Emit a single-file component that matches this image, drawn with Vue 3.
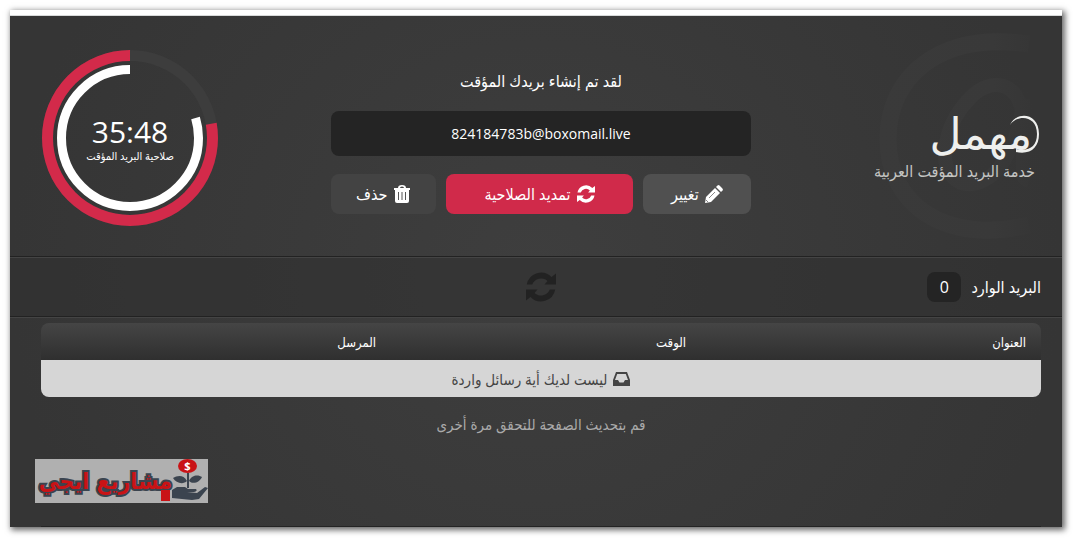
<script setup>
import { computed, ref } from 'vue'

const email = ref('824184783b@boxomail.live')
const messages = ref([])
const remaining = ref(2148)

const columns = [
  { key: 'title', label: 'العنوان' },
  { key: 'time', label: 'الوقت' },
  { key: 'sender', label: 'المرسل' },
]

const clock = computed(() => {
  const minutes = String(Math.floor(remaining.value / 60)).padStart(2, '0')
  const seconds = String(remaining.value % 60).padStart(2, '0')
  return `${minutes}:${seconds}`
})
</script>

<template>
  <div class="window" dir="rtl">
    <header class="hero">
      <div class="brand">
        <svg class="brand-mark" viewBox="0 0 160 210" aria-hidden="true">
          <defs>
            <linearGradient id="mark-fade" gradientUnits="userSpaceOnUse" x1="0" y1="0" x2="152" y2="0">
              <stop offset="0" stop-color="#3a3a3a" />
              <stop offset="0.75" stop-color="#393939" />
              <stop offset="1" stop-color="#363636" />
            </linearGradient>
          </defs>
          <g fill="none" stroke="url(#mark-fade)">
            <path d="M150 11C60 -2 9 44 9 106C9 172 66 212 150 192" stroke-width="17" />
            <path d="M144 84C140 48 112 44 92 64C66 90 60 126 72 142C86 160 112 150 126 126C138 104 142 90 144 66V140Q144 146 150 148" stroke-width="14" />
          </g>
        </svg>
        <div class="brand-name">
          مهمل
          <svg class="brand-swirl" viewBox="0 0 30 40" aria-hidden="true">
            <path d="M1 10C8 -1 28 0 28 19C28 32 19 37 7 34L7 37C21 40 30 33 30 19C30 -3 7 -4 1 10Z" fill="#eeefed" />
          </svg>
        </div>
        <div class="tagline">خدمة البريد المؤقت العربية</div>
      </div>

      <div class="mailbox">
        <label class="status" for="address">لقد تم إنشاء بريدك المؤقت</label>
        <input id="address" v-model="email" class="address" type="text" dir="ltr" readonly />
        <div class="actions">
          <button class="btn btn--edit" type="button">
            <svg class="icon" viewBox="0 0 18 18" aria-hidden="true">
              <path d="M0 18L1 12L10 3L15 8L6 17Z" fill="currentColor" />
              <path d="M11 2L12.500 .5Q13.500 -.3 14.500 .6L17.400 3.500Q18.300 4.500 17.500 5.500L16 7Z" fill="currentColor" />
              <path d="M4 13L10 7M1 15L3 17" stroke="#888" stroke-width="1" />
            </svg>
            تغيير
          </button>
          <button class="btn btn--renew" type="button">
            <svg class="icon" viewBox="0 0 30 30" aria-hidden="true">
              <path d="M.8 12.500A14.500 14.500 0 0 1 25.500 5L30 1.500V12.500H18.500L21.500 9A9.500 9.500 0 0 0 6.200 12.500Z" fill="currentColor" />
              <path d="M29.200 17.500A14.500 14.500 0 0 1 4.500 25L0 28.500V17.500H11.500L8.500 21A9.500 9.500 0 0 0 23.800 17.500Z" fill="currentColor" />
            </svg>
            تمديد الصلاحية
          </button>
          <button class="btn btn--delete" type="button">
            <svg class="icon" viewBox="0 0 18 18" aria-hidden="true">
              <path d="M5 3Q5 0 9 0Q13 0 13 3H17V5H1V3ZM7 3H11Q11 1.500 9 1.500Q7 1.500 7 3Z" fill="currentColor" />
              <path d="M2 5H16V16Q16 18 14 18H4Q2 18 2 16Z" fill="currentColor" />
              <path d="M5.500 7V15M9 7V15M12.500 7V15" stroke="#555" stroke-width="1" />
            </svg>
            حذف
          </button>
        </div>
      </div>

      <div class="timer">
        <svg class="rings" viewBox="0 0 176 176" aria-hidden="true">
          <g fill="none" transform="rotate(-90 88 88)">
            <circle cx="88" cy="88" r="82.500" stroke="#3d3d3d" stroke-width="11" />
            <circle cx="88" cy="88" r="82.500" stroke="#d32a4a" stroke-width="11" pathLength="360" stroke-dasharray="0 80 280" />
            <circle cx="88" cy="88" r="68.500" stroke="#fff" stroke-width="9" pathLength="360" stroke-dasharray="0 73 287" />
          </g>
        </svg>
        <div class="timer-text">
          <div class="clock">{{ clock }}</div>
          <div class="timer-label">صلاحية البريد المؤقت</div>
        </div>
      </div>
    </header>

    <section class="toolbar">
      <h2 class="inbox-title">
        البريد الوارد
        <span class="count">{{ messages.length }}</span>
      </h2>
      <button class="refresh" type="button" aria-label="تحديث">
        <svg viewBox="0 0 30 30" width="30" height="30" aria-hidden="true">
          <path d="M.8 12.500A14.500 14.500 0 0 1 25.500 5L30 1.500V12.500H18.500L21.500 9A9.500 9.500 0 0 0 6.200 12.500Z" fill="currentColor" />
          <path d="M29.200 17.500A14.500 14.500 0 0 1 4.500 25L0 28.500V17.500H11.500L8.500 21A9.500 9.500 0 0 0 23.800 17.500Z" fill="currentColor" />
        </svg>
      </button>
    </section>

    <main class="content">
      <table class="messages">
        <thead>
          <tr>
            <th v-for="column in columns" :key="column.key" :class="`col--${column.key}`" scope="col">{{ column.label }}</th>
          </tr>
        </thead>
        <tbody>
          <tr v-for="message in messages" :key="message.id">
            <td v-for="column in columns" :key="column.key">{{ message[column.key] }}</td>
          </tr>
          <tr v-if="!messages.length">
            <td :colspan="columns.length">
              <span class="empty-text">
                <svg viewBox="0 0 17 14" width="17" height="14" aria-hidden="true">
                  <path fill-rule="evenodd" d="M3 0H14L17 8V14H0V8ZM4.200 2L2 8H5L6.500 10.500H10.500L12 8H15L12.800 2Z" fill="currentColor" />
                </svg>
                ليست لديك أية رسائل واردة
              </span>
            </td>
          </tr>
        </tbody>
      </table>
      <p class="hint">قم بتحديث الصفحة للتحقق مرة أخرى</p>
    </main>

    <footer class="footer">
      <div class="sponsor">
        <svg class="sponsor-art" viewBox="0 0 36 44" aria-hidden="true">
          <g fill="#3b444f">
            <path d="M15 14H17V29H15Z" />
            <path d="M15 22C11 15 5 17 1 19C4 24 11 26 15 22ZM17 22C20 15 27 16 30 18C28 23 21 26 17 22Z" />
            <path d="M0 31L5 28H13L16 30H24Q26 32 22 33H15L25 34L33 28L36 29L27 40L20 41L0 39Z" />
          </g>
          <ellipse cx="15.500" cy="7" rx="9.500" ry="7" fill="#c91316" />
          <text x="15.500" y="11" text-anchor="middle" class="coin">$</text>
        </svg>
        <span class="sponsor-name">مشاريع ايجي</span>
        <span class="sponsor-dot"></span>
      </div>
    </footer>
  </div>
</template>

<style>
body {
  margin: 0;
  background: #fff;
}
</style>

<style scoped>
.window {
  margin: 10px 11px 11px 10px;
  border-top: 5px solid #fff;
  background: radial-gradient(ellipse 50% 100% at 50% 50%, #3e3e3e, #353535);
  background-clip: padding-box;
  box-shadow: 2px 2px 6px 1px rgba(0, 0, 0, 0.6);
  color: #fff;
  font-family: 'Open Sans', 'DejaVu Sans Condensed', 'DejaVu Sans', sans-serif;
  font-size: 16px;
}

.hero {
  box-sizing: border-box;
  min-height: 242px;
  padding: 3px 21px 0 31px;
  border-top: 1px solid #d8dada;
  border-bottom: 1px solid #222;
  display: grid;
  grid-template-columns: 1fr 420px 1fr;
  align-items: center;
}

.brand {
  position: relative;
  justify-self: start;
  padding-top: 16px;
}

.brand-mark {
  position: absolute;
  width: 160px;
  height: 210px;
  right: 2px;
  top: 50%;
  margin-top: -105px;
}

.brand-name {
  position: relative;
  width: max-content;
  padding-right: 9px;
  color: #eeefed;
  font-family: 'DejaVu Sans', sans-serif;
  font-size: 44px;
  line-height: 50px;
}

.brand-swirl {
  position: absolute;
  width: 30px;
  height: 40px;
  right: 2px;
  top: 6px;
}

.tagline {
  position: relative;
  padding-right: 6px;
  color: #c4c5c3;
  line-height: 24px;
}

.mailbox {
  padding-top: 8px;
}

.status {
  display: block;
  margin-bottom: 18px;
  text-align: center;
  line-height: 24px;
}

.address {
  display: block;
  box-sizing: border-box;
  width: 100%;
  height: 45px;
  border: 0;
  border-radius: 8px;
  background: #242424;
  color: #fff;
  font-family: inherit;
  font-size: 14px;
  text-align: center;
}

.actions {
  display: grid;
  grid-template-columns: 108fr 186fr 105fr;
  gap: 10px;
  margin-top: 18px;
}

.btn {
  display: flex;
  align-items: center;
  justify-content: center;
  gap: 6px;
  height: 40px;
  padding: 0;
  border: 0;
  border-radius: 8px;
  color: #fff;
  font: inherit;
  cursor: pointer;
}

.btn--edit {
  background: #505050;
}

.btn--renew {
  background: #d02a4a;
}

.btn--delete {
  background: #434343;
}

.icon {
  width: 18px;
  height: 18px;
}

.timer {
  position: relative;
  justify-self: end;
  width: 176px;
  height: 176px;
  margin-left: 1px;
  display: grid;
  place-items: center;
}

.rings {
  position: absolute;
  inset: 0;
}

.timer-text {
  padding-top: 4px;
  text-align: center;
}

.clock {
  font-size: 30px;
  line-height: 32px;
}

.timer-label {
  font-size: 11px;
  line-height: 16px;
}

.toolbar {
  display: flex;
  align-items: center;
  justify-content: center;
  height: 58px;
  padding: 0 21px 0 31px;
  border-top: 1px solid #444;
  border-bottom: 1px solid #222;
  background: rgba(49, 49, 49, 0.6);
}

.toolbar::after {
  content: '';
  flex: 1;
}

.inbox-title {
  flex: 1;
  display: flex;
  align-items: center;
  gap: 10px;
  margin: 0;
  font-size: 16px;
  font-weight: 400;
}

.count {
  width: 34px;
  border-radius: 8px;
  background: #242424;
  line-height: 30px;
  text-align: center;
}

.refresh {
  display: flex;
  padding: 0;
  border: 0;
  background: none;
  color: #222;
  cursor: pointer;
}

.content {
  padding: 5px 21px 0 31px;
  border-top: 1px solid #444;
}

.messages {
  width: 100%;
  border-spacing: 0;
  border-radius: 8px;
  overflow: hidden;
  table-layout: fixed;
  background: linear-gradient(#454545, #2f2f2f 37px);
}

.messages th,
.messages td {
  box-sizing: border-box;
  height: 37px;
  padding: 0 15px;
}

.messages th {
  font-size: 13px;
  font-weight: 400;
  text-align: right;
}

.col--title {
  width: 34%;
}

.col--time {
  width: 31%;
}

.messages td {
  background: #d6d6d6;
  color: #444;
  font-size: 15px;
}

.empty-text {
  display: flex;
  align-items: center;
  justify-content: center;
  gap: 6px;
}

.hint {
  margin: 15px 0 23px;
  color: #aaa;
  font-size: 15px;
  line-height: 24px;
  text-align: center;
}

.footer {
  position: relative;
  display: flex;
  justify-content: flex-end;
  padding: 0 25px 24px;
}

.footer::after {
  content: '';
  position: absolute;
  right: 21px;
  left: 31px;
  bottom: 0;
  height: 1px;
  background: #242424;
}

.sponsor {
  position: relative;
  display: flex;
  align-items: center;
  width: 173px;
  height: 44px;
  background: #b0b0b0;
}

.sponsor-art {
  flex: none;
  width: 36px;
  height: 44px;
}

.coin {
  fill: #fff;
  font: bold 11px 'Open Sans', sans-serif;
}

.sponsor-name {
  flex: 1;
  color: #c91316;
  font-family: 'DejaVu Sans Condensed', 'DejaVu Sans', sans-serif;
  font-size: 23px;
  font-weight: 700;
  line-height: 40px;
  white-space: nowrap;
  -webkit-text-stroke: 4px #3b444f;
  paint-order: stroke fill;
}

.sponsor-dot {
  position: absolute;
  left: 126px;
  bottom: 2px;
  width: 9px;
  height: 11px;
  background: #c91316;
}
</style>
